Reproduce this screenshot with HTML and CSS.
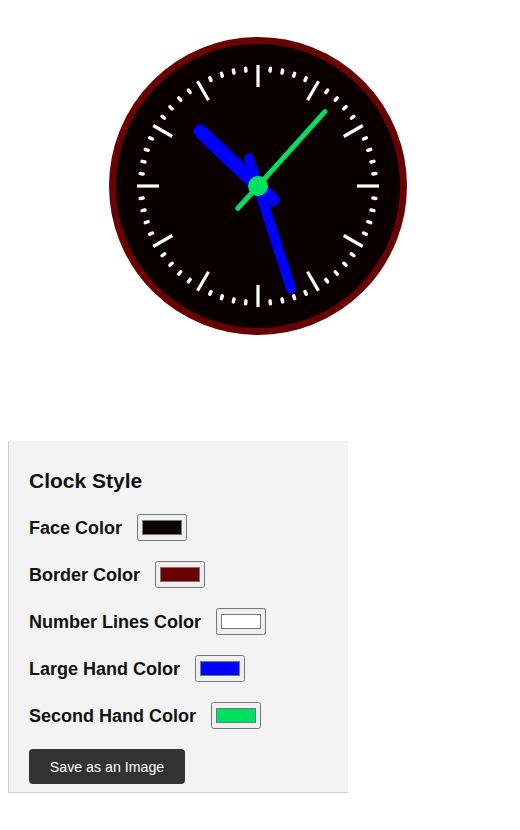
FILE: index.html
```html
<!DOCTYPE html>
<html>
<head>
<meta charset="utf-8">
<link rel="stylesheet" href="styles.css">
</head>
<body>
<div class="clock-wrap">
  <svg class="clock" width="300" height="300" viewBox="-150 -150 300 300">
    <circle cx="0" cy="0" r="145.5" fill="#0a0000" stroke="#690303" stroke-width="7"/>
    <g id="ticks"></g>
    <g stroke-linecap="round">
      <line x1="0" y1="20" x2="0" y2="-79" stroke="#0000ff" stroke-width="14" transform="rotate(313.5)"/>
      <line x1="0" y1="29" x2="0" y2="-108" stroke="#0000ff" stroke-width="10" transform="rotate(162.2)"/>
      <line x1="0" y1="30" x2="0" y2="-100" stroke="#00e060" stroke-width="5" transform="rotate(42)"/>
    </g>
    <circle cx="0" cy="0" r="10" fill="#00e060"/>
  </svg>
</div>
<div class="panel">
  <h2 class="title">Clock Style</h2>
  <div class="row"><span class="label">Face Color</span><input class="swatch" type="color" value="#0a0000"></div>
  <div class="row"><span class="label">Border Color</span><input class="swatch" type="color" value="#690303"></div>
  <div class="row"><span class="label">Number Lines Color</span><input class="swatch" type="color" value="#ffffff"></div>
  <div class="row"><span class="label">Large Hand Color</span><input class="swatch" type="color" value="#0000ff"></div>
  <div class="row"><span class="label">Second Hand Color</span><input class="swatch" type="color" value="#00e060"></div>
  <button class="save">Save as an Image</button>
</div>
<script>
  var g = document.getElementById('ticks');
  var ns = 'http://www.w3.org/2000/svg';
  for (var i = 0; i < 60; i++) {
    var l = document.createElementNS(ns, 'line');
    l.setAttribute('x1', 0);
    l.setAttribute('x2', 0);
    if (i % 5 === 0) {
      l.setAttribute('y1', -99);
      l.setAttribute('y2', -121);
      l.setAttribute('stroke-width', 3.2);
    } else {
      l.setAttribute('y1', -115.5);
      l.setAttribute('y2', -118.5);
      l.setAttribute('stroke-width', 3.5);
      l.setAttribute('stroke-linecap', 'round');
    }
    l.setAttribute('stroke', '#ffffff');
    l.setAttribute('transform', 'rotate(' + (i * 6) + ')');
    g.appendChild(l);
  }
</script>
</body>
</html>
```
FILE: styles.css
```css
body {
  margin: 8px;
  font-family: "Liberation Sans", Arial, sans-serif;
  background: #ffffff;
}
.clock-wrap {
  height: 433px;
  box-sizing: border-box;
  padding: 28px 0 0 100px;
}
.clock {
  display: block;
}
.panel {
  width: 340px;
  box-sizing: border-box;
  background: #f3f3f3;
  border-left: 1px solid #cccccc;
  border-bottom: 1px solid #cccccc;
  padding: 28px 20px 8px 20px;
  display: flex;
  flex-direction: column;
  align-items: flex-start;
  gap: 20px;
}
.title {
  margin: 0 0 1px 0;
  font-size: 21px;
  line-height: 24px;
  font-weight: bold;
  color: #111111;
}
.row {
  display: flex;
  align-items: center;
  gap: 15px;
  height: 27px;
}
.label {
  font-size: 18px;
  font-weight: bold;
  color: #111111;
  padding-top: 2px;
}
.swatch {
  width: 50px;
  height: 27px;
  margin: 0;
}
.save {
  width: 156px;
  height: 35px;
  padding: 0;
  background: #333333;
  color: #ffffff;
  border: none;
  border-radius: 4px;
  font-family: "Liberation Sans", Arial, sans-serif;
  font-size: 14.2px;
}
```
